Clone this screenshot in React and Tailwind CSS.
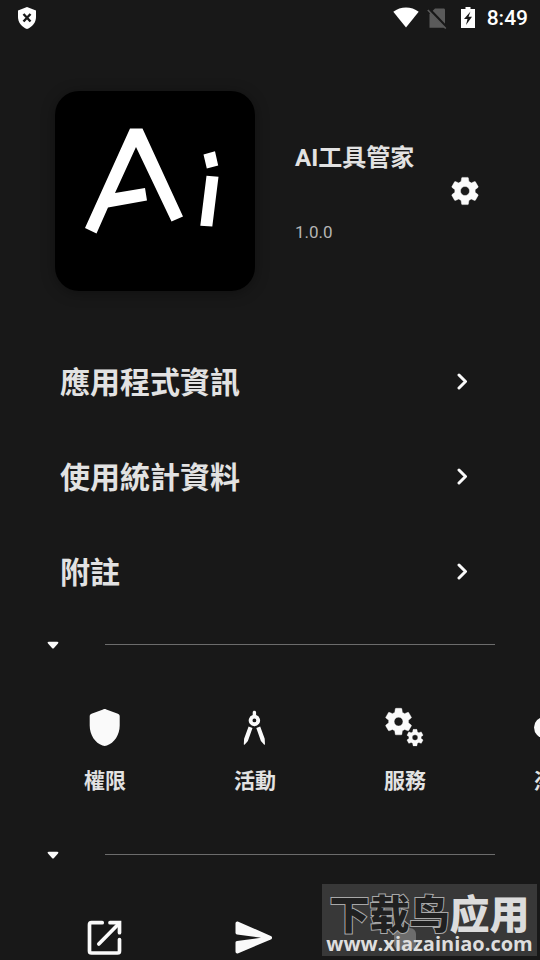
import React from 'react';

const GEAR =
    'M19.14 12.94c.04-.3.06-.61.06-.94 0-.32-.02-.64-.07-.94l2.03-1.58c.18-.14.23-.41.12-.61l-1.92-3.32c-.12-.22-.37-.29-.59-.22l-2.39.96c-.5-.38-1.03-.7-1.62-.94L14.4 2.81c-.04-.24-.24-.41-.48-.41h-3.84c-.24 0-.43.17-.47.41l-.36 2.54c-.59.24-1.13.57-1.62.94l-2.39-.96c-.22-.08-.47 0-.59.22L2.74 8.87c-.12.21-.08.47.12.61l2.03 1.58c-.05.3-.09.63-.09.94s.02.64.07.94l-2.03 1.58c-.18.14-.23.41-.12.61l1.92 3.32c.12.22.37.29.59.22l2.39-.96c.5.38 1.03.7 1.62.94l.36 2.54c.05.24.24.41.48.41h3.84c.24 0 .44-.17.47-.41l.36-2.54c.59-.24 1.13-.56 1.62-.94l2.39.96c.22.08.47 0 .59-.22l1.92-3.32c.12-.22.07-.47-.12-.61l-2.01-1.58zM12 15.2A3.2 3.2 0 1 1 12 8.8a3.2 3.2 0 0 1 0 6.4z';

const GearIcon = ({ className }) => (
    <svg viewBox="0 0 24 24" fill="currentColor" className={className} aria-hidden="true">
        <path d={GEAR} stroke="currentColor" strokeWidth=".3" />
    </svg>
);

const ShieldIcon = () => (
    <svg viewBox="0 0 40 40" fill="currentColor" className="size-10">
        <path d="M19.700 2c.6 0 1 .1 1.600.4l11.600 4.300c1.200.5 1.800 1.300 1.800 2.600V18.500c0 9.500-5.500 17.500-12.800 20-1.500.6-2.900.6-4.400 0-7.300-2.500-12.800-10.500-12.800-20V9.300c0-1.300.6-2.100 1.800-2.600l11.600-4.300c.6-.3 1-.4 1.600-.4z" />
    </svg>
);

const CompassIcon = () => (
    <svg viewBox="0 0 40 40" fill="currentColor" className="size-10">
        <path
            fillRule="evenodd"
            d="M17.700 8V5.500c0-1.200.7-1.800 1.700-1.800s1.700.6 1.700 1.800V8a5.700 5.700 0 1 1-3.400 0zM19.400 11.500a1.900 1.900 0 1 0 0 3.800 1.900 1.900 0 0 0 0-3.800z"
        />
        <path d="M13.600 19.400l3.900 1.500-4.600 13-3.300 3.900-.8-.4.300-5.700zM25.200 19.400l-3.900 1.500 4.600 13 3.300 3.900.8-.4-.3-5.700z" />
    </svg>
);

const GearsIcon = () => (
    <svg viewBox="0 0 40 40" fill="currentColor" stroke="currentColor" strokeWidth=".3" className="size-10">
        <g transform="translate(-3 -2) scale(1.380)">
            <path d={GEAR} />
        </g>
        <g transform="translate(19.700 20.300) scale(.86)">
            <path d={GEAR} />
        </g>
    </svg>
);

const KeyIcon = () => (
    <svg viewBox="0 0 40 40" fill="currentColor" className="size-10 overflow-visible">
        <circle cx="9.500" cy="20.500" r="10.500" />
        <path d="M18 17.500h20v6h-4v6h-6v-6H18z" />
    </svg>
);

const OpenIcon = () => (
    <svg
        viewBox="0 0 40 40"
        fill="none"
        stroke="currentColor"
        strokeWidth="3.700"
        strokeLinecap="round"
        strokeLinejoin="round"
        className="size-10"
    >
        <path d="M17.200 4.700H6.500a2 2 0 0 0-2 2V33a2 2 0 0 0 2 2h26a2 2 0 0 0 2-2V21.500" />
        <path d="M13.800 26L33.500 6" />
        <path d="M25 4.700h9.500v10" strokeLinejoin="miter" />
    </svg>
);

const SendIcon = () => (
    <svg viewBox="0 0 40 40" fill="currentColor" className="size-10">
        <path d="M.5 5.500c0-1.600 1.300-2.400 2.800-1.800l32.500 14.200c1.700.8 1.700 2.800 0 3.600L3.300 35.200C1.800 35.800.5 35 .5 33.500V24.800c0-1 .5-1.500 1.500-1.700L26 19.800 2 16.400c-1-.2-1.500-.8-1.500-1.700z" />
    </svg>
);

const StatusBar = () => (
    <header className="flex h-9 items-center justify-between pr-3 pl-4">
        <svg viewBox="0 0 22 24" className="h-6 w-[22px]" aria-label="Security alert">
            <path d="M11 1l9 3.600V11c0 5.500-3.700 10-9 12-5.300-2-9-6.500-9-12V4.600z" fill="#fff" />
            <path d="M7.500 8l7 7.500M14.500 8l-7 7.500" stroke="#181818" strokeWidth="2.400" />
        </svg>
        <div className="flex items-center text-white">
            <svg viewBox="0 0 26 22" className="h-[22px] w-[26px]" fill="currentColor" aria-label="Wi-Fi">
                <path d="M13 20.500L.3 4.700C7.500-1 18.500-1 25.700 4.700z" />
            </svg>
            <svg viewBox="0 0 20 22" className="ml-2 h-[22px] w-5" aria-label="No SIM">
                <path d="M8 1.500h8.500c1 0 1.500.6 1.500 1.500v17.700H2.500V7z" fill="#5a5a5a" />
                <path d="M2 2l17.500 18.500" stroke="#181818" strokeWidth="3" />
                <path d="M.8 3l18 18.500" stroke="#5a5a5a" strokeWidth="1.600" />
            </svg>
            <svg viewBox="0 0 14 22" className="ml-3.5 h-[22px] w-3.5" aria-label="Battery charging">
                <path d="M4.500 0h5v2H14v19H0V2h4.500z" fill="currentColor" />
                <path d="M9.500 4.500L3 12h3.500L5 18l6-8.200H7.500z" fill="#181818" />
            </svg>
            <span className="ml-3 text-[21px] leading-6 font-medium">8:49</span>
        </div>
    </header>
);

const AppLogo = () => (
    <div className="size-50 shrink-0 rounded-3xl bg-black shadow-[0_2px_14px_rgba(0,0,0,0.35)]">
        <svg viewBox="0 0 200 200" fill="#fff" className="size-full" aria-label="Ai">
            <path d="M75 37.500h12.500L128 125.500l-11.500 5L81 56 60 102l30-5 2 12.500-39 7L41.500 142.500l-11.500-5.500z" />
            <path d="M148.500 63.500l11.500-3.300 3.200 14.200-11.400 3zM151.500 84.800l12 1-6.200 49.700-12-.8z" />
        </svg>
    </div>
);

const menuItems = ['應用程式資訊', '使用統計資料', '附註'];

const components = [
    { label: '權限', Icon: ShieldIcon },
    { label: '活動', Icon: CompassIcon },
    { label: '服務', Icon: GearsIcon },
    { label: '憑證', Icon: KeyIcon },
];

const actions = [
    { name: 'Open', Icon: OpenIcon },
    { name: 'Share', Icon: SendIcon },
];

const SectionDivider = () => (
    <div className="flex h-5 items-center px-[45px]">
        <button type="button" aria-label="Collapse section" className="w-15 shrink-0 pl-0.5 text-left">
            <svg viewBox="0 0 12 10" className="h-2.5 w-3" fill="#fafafa">
                <path d="M1.800 2.800h8.400c1.300 0 1.500.8.800 1.600L7 8.900c-.7.800-1.300.8-2 0L1 4.400C.3 3.600.5 2.800 1.800 2.800z" />
            </svg>
        </button>
        <hr className="flex-1 border-[#6c6c6c]" />
    </div>
);

const IconRow = ({ items }) => (
    <div className="flex overflow-hidden pl-[30px]">
        {items.map(({ label, name, Icon }) => (
            <button
                key={label || name}
                type="button"
                aria-label={name}
                className="flex w-[150px] shrink-0 flex-col items-center gap-5 text-[#fafafa]"
            >
                <Icon />
                {label && <span className="text-[21px] leading-7 font-bold text-[#e2e2e2]">{label}</span>}
            </button>
        ))}
    </div>
);

const Watermark = () => (
    <div className="absolute right-[3px] bottom-1 flex h-[72px] w-[215px] flex-col items-center justify-end bg-[#383838]">
        <div className="absolute top-[44px] left-[72px] size-[22px] rounded-md bg-[#6c6c6c]" />
        <p className="relative font-['Noto_Sans_CJK_SC',sans-serif] text-[40px] leading-10 font-black whitespace-nowrap text-[#dcdcdc]">
            <span className="text-[#202020] [-webkit-text-stroke:2px_#a8a8a8] [paint-order:stroke_fill]">下载鸟</span>应用
        </p>
        <p className="relative font-['Open_Sans',sans-serif] text-xl leading-6 font-bold whitespace-nowrap text-[#dedede]">
            www.xiazainiao.com
        </p>
    </div>
);

const App = () => (
    <div className="relative h-screen overflow-hidden bg-[#181818] font-[Roboto,'Noto_Sans_CJK_TC',sans-serif] text-[#e2e2e2]">
        <StatusBar />
        <main>
            {/* App summary */}
            <section className="flex items-center px-[55px] pt-[55px]">
                <AppLogo />
                <div className="ml-10 flex flex-1 items-center justify-between pr-[3px]">
                    <div className="pt-1">
                        <h1 className="text-2xl leading-8 font-bold whitespace-nowrap">AI工具管家</h1>
                        <p className="mt-[46px] text-[17px] leading-6 text-[#b4b4b4]">1.0.0</p>
                    </div>
                    <button type="button" aria-label="Settings" className="shrink-0 text-[#fafafa]">
                        <GearIcon className="size-[34px]" />
                    </button>
                </div>
            </section>

            {/* Detail pages */}
            <nav className="mt-11">
                {menuItems.map((item) => (
                    <button
                        key={item}
                        type="button"
                        className="flex h-[95px] w-full items-center justify-between pr-[70px] pl-15 text-left"
                    >
                        <span className="text-[30px] leading-10 font-bold">{item}</span>
                        <svg viewBox="0 0 16 20" className="h-5 w-4" fill="none" stroke="#fafafa" strokeWidth="3" strokeLinecap="round" strokeLinejoin="round">
                            <path d="M5 2l6.500 6.500L5 15" />
                        </svg>
                    </button>
                ))}
            </nav>

            <div className="mt-3.5">
                <SectionDivider />
            </div>
            <section className="mt-[53px]">
                <IconRow items={components} />
            </section>

            <div className="mt-[49px]">
                <SectionDivider />
            </div>
            <section className="mt-[54px]">
                <IconRow items={actions} />
            </section>
        </main>
        <Watermark />
    </div>
);

export default App;
